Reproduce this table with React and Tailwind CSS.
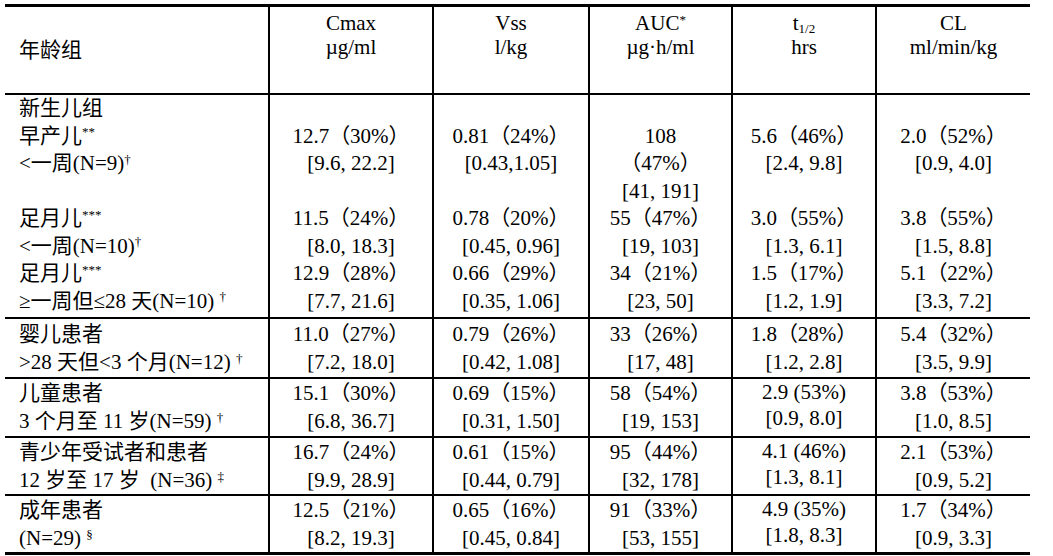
import React from "react";

const LH_NEO = "leading-[27.5px] h-[27.5px] whitespace-nowrap";
const LH = "leading-[28px] h-[28px] whitespace-nowrap";
const LH_T = "leading-[26px] h-[26px] whitespace-nowrap";

function Sup({ children }) {
  return <sup className="text-[13px]">{children}</sup>;
}

function Lines({ lines, cls }) {
  return lines.map((t, i) => (
    <div key={i} className={cls}>
      {t === "" ? "\u00a0" : t}
    </div>
  ));
}

// neonatal block: three sub-rows without rules between them
const neo = [
  {
    h: "h-[110px]",
    label: ["新生儿组", <>早产儿<Sup>**</Sup></>, <>&lt;一周(N=9)<Sup>†</Sup></>],
    cells: [
      ["", "12.7（30%）", "[9.6, 22.2]"],
      ["", "0.81（24%）", "[0.43,1.05]"],
      ["", "108", "（47%）", "[41, 191]"],
      ["", "5.6（46%）", "[2.4, 9.8]"],
      ["", "2.0（52%）", "[0.9, 4.0]"],
    ],
  },
  {
    h: "h-[55px]",
    label: [<>足月儿<Sup>***</Sup></>, <>&lt;一周(N=10)<Sup>†</Sup></>],
    cells: [
      ["11.5（24%）", "[8.0, 18.3]"],
      ["0.78（20%）", "[0.45, 0.96]"],
      ["55（47%）", "[19, 103]"],
      ["3.0（55%）", "[1.3, 6.1]"],
      ["3.8（55%）", "[1.5, 8.8]"],
    ],
  },
  {
    h: "h-[59px] border-b-2",
    label: [<>足月儿<Sup>***</Sup></>, <>≥一周但≤28 天(N=10) <Sup>†</Sup></>],
    cells: [
      ["12.9（28%）", "[7.7, 21.6]"],
      ["0.66（29%）", "[0.35, 1.06]"],
      ["34（21%）", "[23, 50]"],
      ["1.5（17%）", "[1.2, 1.9]"],
      ["5.1（22%）", "[3.3, 7.2]"],
    ],
  },
];

const groups = [
  {
    h: "h-[60px] border-b-2 pt-[1px]",
    label: ["婴儿患者", <>&gt;28 天但&lt;3 个月(N=12) <Sup>†</Sup></>],
    cells: [
      ["11.0（27%）", "[7.2, 18.0]"],
      ["0.79（26%）", "[0.42, 1.08]"],
      ["33（26%）", "[17, 48]"],
      ["1.8（28%）", "[1.2, 2.8]"],
      ["5.4（32%）", "[3.5, 9.9]"],
    ],
  },
  {
    h: "h-[59px] border-b-2",
    tight: true,
    label: ["儿童患者", <>3 个月至 11 岁(N=59) <Sup>†</Sup></>],
    cells: [
      ["15.1（30%）", "[6.8, 36.7]"],
      ["0.69（15%）", "[0.31, 1.50]"],
      ["58（54%）", "[19, 153]"],
      ["2.9 (53%)", "[0.9, 8.0]"],
      ["3.8（53%）", "[1.0, 8.5]"],
    ],
  },
  {
    h: "h-[58px] border-b-2",
    tight: true,
    label: ["青少年受试者和患者", <>12 岁至 17 岁&nbsp; (N=36) <Sup>‡</Sup></>],
    cells: [
      ["16.7（24%）", "[9.9, 28.9]"],
      ["0.61（15%）", "[0.44, 0.79]"],
      ["95（44%）", "[32, 178]"],
      ["4.1 (46%)", "[1.3, 8.1]"],
      ["2.1（53%）", "[0.9, 5.2]"],
    ],
  },
  {
    h: "h-[57px] border-b-[3px]",
    tight: true,
    label: ["成年患者", <>(N=29) <Sup>§</Sup></>],
    cells: [
      ["12.5（21%）", "[8.2, 19.3]"],
      ["0.65（16%）", "[0.45, 0.84]"],
      ["91（33%）", "[53, 155]"],
      ["4.9 (35%)", "[1.8, 8.3]"],
      ["1.7（34%）", "[0.9, 3.3]"],
    ],
  },
];

const headers = [
  [<>Cmax</>, <>µg/ml</>],
  [<>Vss</>, <>l/kg</>],
  [<>AUC<Sup>*</Sup></>, <>µg·h/ml</>],
  [<>t<sub className="text-[13px]">1/2</sub></>, <>hrs</>],
  [<>CL</>, <>ml/min/kg</>],
];

export default function App() {
  return (
    <div className="w-[1053px] h-[556px] bg-white pt-[4px] pl-[5px] text-black font-['Liberation_Serif','Noto_Sans_CJK_SC',serif]">
      <table className="table-fixed border-separate border-spacing-0 w-[1025px] text-[21px]">
        <colgroup>
          <col className="w-[263px]" />
          <col className="w-[164px]" />
          <col className="w-[156px]" />
          <col className="w-[143px]" />
          <col className="w-[144px]" />
          <col className="w-[155px]" />
        </colgroup>
        <thead>
          <tr>
            <th className="h-[91px] border-t-[3px] border-b-2 border-black align-middle text-left font-normal pl-[14px] leading-[28px]">
              年龄组
            </th>
            {headers.map((h, i) => (
              <th
                key={i}
                className="h-[91px] border-t-[3px] border-b-2 border-l-2 border-black align-top text-center font-normal pt-[4px] leading-[24px]"
              >
                <div className="h-[24px]">{h[0]}</div>
                <div className="h-[24px]">{h[1]}</div>
              </th>
            ))}
          </tr>
        </thead>
        <tbody>
          {neo.map((r, ri) => (
            <tr key={ri}>
              <td className={`${r.h} border-black align-top pl-[14px] p-0`}>
                <Lines lines={r.label} cls={LH_NEO} />
              </td>
              {r.cells.map((c, ci) => (
                <td key={ci} className={`${r.h} border-l-2 border-black align-top text-center p-0`}>
                  <Lines lines={c} cls={LH_NEO} />
                </td>
              ))}
            </tr>
          ))}
          {groups.map((r, ri) => (
            <tr key={ri}>
              <td className={`${r.h} border-black align-top pl-[14px]`}>
                <Lines lines={r.label} cls={LH} />
              </td>
              {r.cells.map((c, ci) => (
                <td key={ci} className={`${r.h} border-l-2 border-black align-top text-center`}>
                  <Lines lines={c} cls={r.tight && ci === 3 ? LH_T : LH} />
                </td>
              ))}
            </tr>
          ))}
        </tbody>
      </table>
    </div>
  );
}
